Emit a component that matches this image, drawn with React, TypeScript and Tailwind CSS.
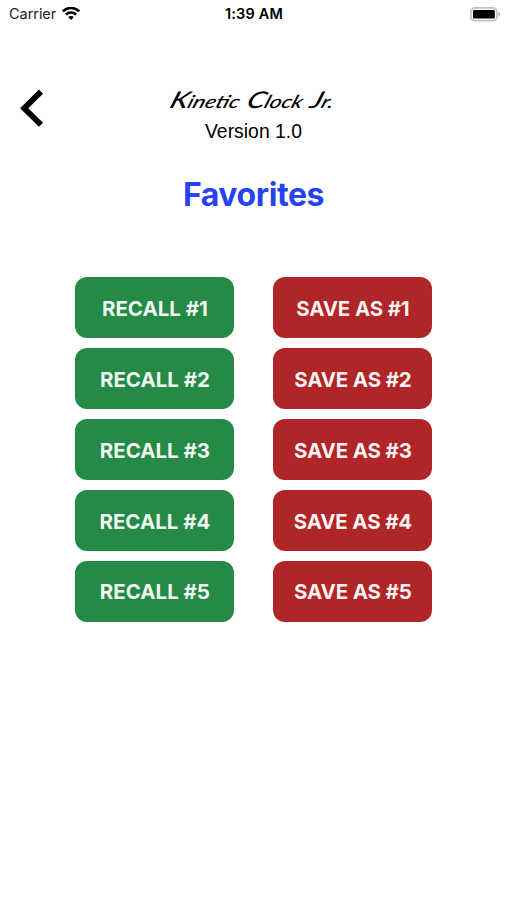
import { FC } from "react";
import clsx from "clsx";

const slots = [1, 2, 3, 4, 5];

interface SlotButtonProps {
  label: string;
  variant: "recall" | "save";
}

const SlotButton: FC<SlotButtonProps> = ({ label, variant }) => (
  <button
    className={clsx(
      "h-[61px] w-[159px] rounded-[12px] pt-[3px] text-[20.5px] font-bold whitespace-nowrap text-white/95",
      variant === "recall"
        ? "bg-[#248a46] tracking-[-0.02px]"
        : "bg-[#b02628] tracking-[-0.15px]"
    )}
  >
    {label}
  </button>
);

const WifiIcon: FC = () => (
  <svg width="18" height="14" viewBox="0 0 18 14" fill="none" stroke="#000" strokeWidth="2.6">
    <path d="M0.9 4.3C5.4 -0.1 12.6 -0.1 17.1 4.3" />
    <path d="M3.8 7.6C6.7 4.8 11.3 4.8 14.2 7.6" />
    <path d="M9 13L6.2 10.1C7.7 8.7 10.3 8.7 11.8 10.1Z" fill="#000" stroke="none" />
  </svg>
);

const BatteryIcon: FC = () => (
  <svg width="31" height="15" viewBox="0 0 31 15" fill="none">
    <rect x="0.9" y="0.9" width="26" height="12.8" rx="4" stroke="#c2c2c2" strokeWidth="1.7" />
    <rect x="3" y="3" width="21.8" height="8.6" rx="1.2" fill="#000" />
    <path d="M28.5 5.1C30.7 5.8 30.7 8.8 28.5 9.5Z" fill="#aaa" />
  </svg>
);

const StatusBar: FC = () => (
  <div className="grid h-7 grid-cols-3 items-center pr-[6px] pl-[9px] text-[14.5px]">
    <div className="flex items-center gap-[6px]">
      <span className="tracking-[-0.05px] text-[#222]">Carrier</span>
      <WifiIcon />
    </div>
    <span className="-ml-[2px] text-center font-semibold tracking-[0.15px]">1:39 AM</span>
    <div className="flex justify-end">
      <BatteryIcon />
    </div>
  </div>
);

const Wordmark: FC = () => (
  <h1 className="flex h-[24px] w-[131px] origin-center -skew-x-[16deg] scale-x-[1.25] items-baseline justify-between font-['Lato',sans-serif] text-[18px] leading-[24px] font-medium whitespace-nowrap italic">
    <span>
      <span className="text-[23px]">K</span>inetic
    </span>
    <span>
      <span className="text-[23px]">C</span>lock
    </span>
    <span>
      <span className="text-[23px]">J</span>r.
    </span>
  </h1>
);

const App: FC = () => {
  return (
    <div className="flex h-[900px] w-[507px] flex-col bg-white font-['Inter',sans-serif] text-black">
      <StatusBar />
      <header className="mt-[59px] grid h-[60px] grid-cols-[60px_1fr_60px]">
        <button aria-label="Back" className="flex items-start pl-[20px]">
          <svg width="25" height="42" viewBox="0 0 25 42" fill="none">
            <path d="M21 4.6L4.2 21.2L21 37.8" stroke="#000" strokeWidth="5.8" />
          </svg>
        </button>
        <div className="flex flex-col items-center">
          <Wordmark />
          <p className="mt-[6px] font-['Liberation_Sans',sans-serif] text-[19.4px] leading-[28px]">
            Version 1.0
          </p>
        </div>
      </header>
      <h2 className="mt-[28px] text-center text-[32px] leading-[40px] font-bold tracking-[-0.4px] text-[#2643ef]">
        Favorites
      </h2>
      <main className="mt-[62.3px] flex justify-center gap-[39px] pl-[0.8px]">
        <div className="flex flex-col gap-[9.9px]">
          {slots.map((slot) => (
            <SlotButton key={slot} label={`RECALL #${slot}`} variant="recall" />
          ))}
        </div>
        <div className="flex flex-col gap-[9.9px]">
          {slots.map((slot) => (
            <SlotButton key={slot} label={`SAVE AS #${slot}`} variant="save" />
          ))}
        </div>
      </main>
    </div>
  );
};

export default App;
